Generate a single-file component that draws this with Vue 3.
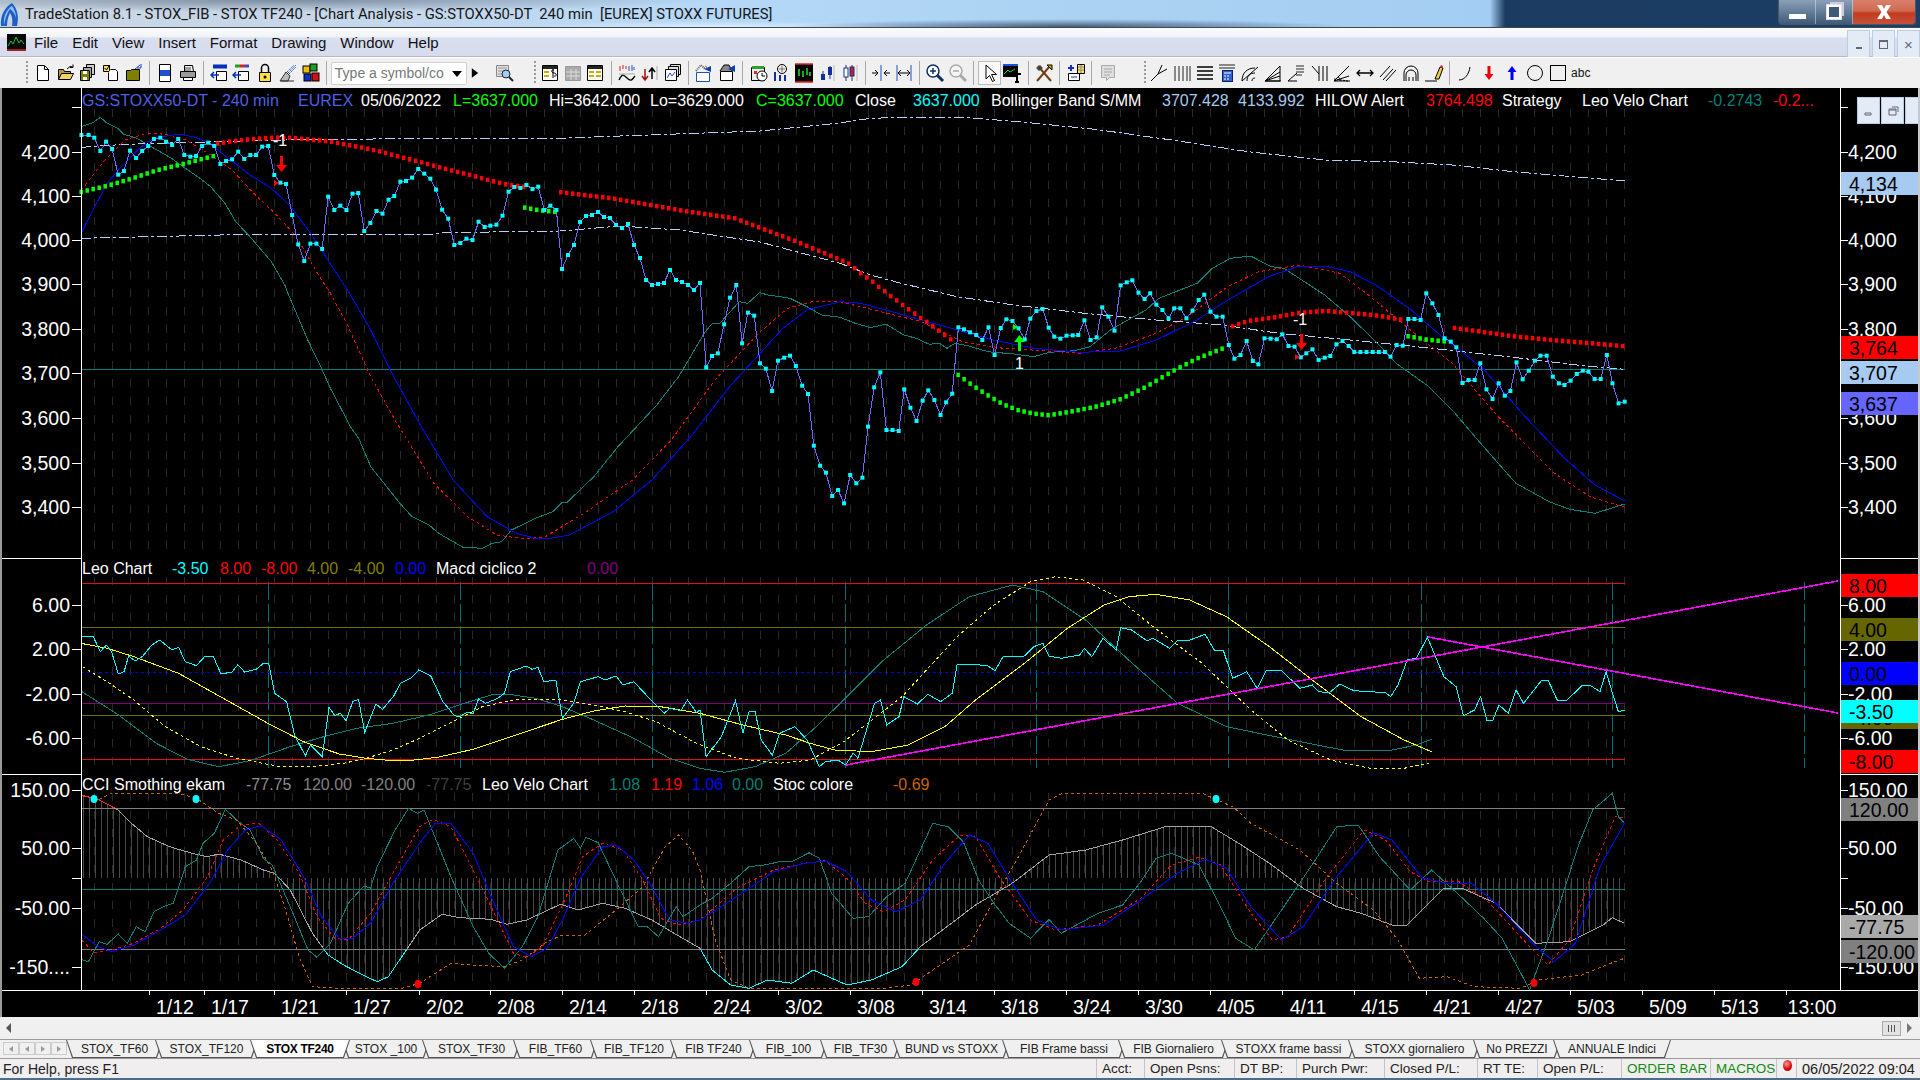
<template>
  <div class="ts">
    <header class="title">
      <svg class="title-ico" viewBox="0 0 20 26">
        <path d="M1 25C0 14 5 6 12 2c6 6 7 15 5 23h-5c1-6 0-10-2-13-2 4-3 8-3 13z" fill="#1f5fc8" />
        <path d="M4 24C3 15 7 8 12 5c3 4 4 8 4 12-1-4-3-7-6-9-3 4-5 10-6 16z" fill="#8fc0f4" />
      </svg>
      <span class="title-txt">{{ windowTitle }}</span>
      <div class="win-btns">
        <button class="wb"><i class="wb-min"></i></button>
        <button class="wb"><i class="wb-res"></i></button>
        <button class="wb wb-close">
          <svg viewBox="0 0 24 18" width="24" height="18"><path d="M5 2h5l2 4 2-4h5l-4.500 7 4.500 7h-5l-2-4-2 4H5l4.500-7z" fill="#fff" /></svg>
        </button>
      </div>
    </header>

    <nav class="menu">
      <svg class="menu-logo" viewBox="0 0 19 17">
        <rect width="19" height="17" fill="#0a0a0a" />
        <rect y="15" width="19" height="2" fill="#a02020" />
        <path d="M1 12l3-5 2 3 3-7 3 6 2-3 3 4" fill="none" stroke="#20c040" />
      </svg>
      <span v-for="m in menus" :key="m" class="menu-item">{{ m }}</span>
      <div class="mdi">
        <span class="mdi-btn"><i class="mdi-min"></i></span>
        <span class="mdi-btn"><i class="mdi-res"></i></span>
        <span class="mdi-btn mdi-x">×</span>
      </div>
    </nav>

    <div class="tools">
      <template v-for="(t, i) in toolbar" :key="i">
        <i v-if="t === '|'" class="sep"></i>
        <i v-else-if="t === 'grip'" class="grip"></i>
        <div v-else-if="t === 'combo'" class="combo">
          <span>Type a symbol/co</span><b class="combo-arrow"></b>
        </div>
        <span v-else-if="t === 'abc'" class="tool abc wide">abc</span>
        <span v-else class="tool" :class="{ wide: i > 56, on: t === 'cursor', tiny: t === 'play' }">
          <svg viewBox="0 0 20 20" width="20" height="20" v-html="ico[t]"></svg>
        </span>
      </template>
    </div>

    <svg class="chart" width="1920" height="929" viewBox="0 88 1920 929">
      <defs>
        <clipPath id="under"><rect x="81" y="949" width="1544" height="50" /></clipPath>
        <clipPath id="over"><rect x="81" y="780" width="1544" height="28" /></clipPath>
      </defs>

      <!-- grid -->
      <g stroke="#2a2a2a" stroke-dasharray="8 10" shape-rendering="crispEdges">
        <template v-for="x in gridX" :key="x">
          <line :x1="x" :x2="x" y1="109" y2="556" />
          <line :x1="x" :x2="x" y1="577" y2="771" />
          <line :x1="x" :x2="x" y1="793" y2="988" />
        </template>
      </g>
      <g stroke="#007070" stroke-dasharray="18 4" shape-rendering="crispEdges">
        <line v-for="x in cycleX" :key="x" :x1="x" :x2="x" y1="582" y2="768" />
      </g>

      <!-- histogram under the CCI line -->
      <g stroke="#484848" shape-rendering="crispEdges">
        <line v-for="h in hist" :key="h.x" :x1="h.x" :x2="h.x" y1="878" :y2="h.y" />
      </g>

      <!-- level lines -->
      <g shape-rendering="crispEdges">
        <line v-for="l in levels" :key="l.y" x1="81" x2="1625" :y1="l.y" :y2="l.y" :stroke="l.c" :stroke-dasharray="l.d" />
      </g>

      <!-- series -->
      <g fill="none" shape-rendering="crispEdges">
        <polyline v-for="s in series" :key="s.k" :points="pts(s.p)" :stroke="s.c" :stroke-dasharray="s.d" />
        <polyline :points="pts(cciLine)" stroke="#00ffff" clip-path="url(#under)" />
        <polyline :points="pts(cciLine)" stroke="#ff3030" clip-path="url(#over)" />
        <line x1="846" y1="765" x2="1838" y2="581" stroke="#ff00ff" stroke-width="1.6" />
        <line x1="1428" y1="637" x2="1838" y2="713" stroke="#ff00ff" stroke-width="1.6" />
      </g>

      <rect v-for="(d, i) in redDots" :key="'r' + i" :x="d[0] - 2" :y="d[1] - 2" width="3.500" height="4.500" fill="#ff0000" />
      <rect v-for="(d, i) in greenDots" :key="'g' + i" :x="d[0] - 2" :y="d[1] - 2" width="3.500" height="4.500" fill="#00ff00" />
      <rect v-for="(d, i) in price" :key="'c' + i" :x="d[0] - 2" :y="d[1] - 2" width="4" height="4" fill="#00ffff" />

      <!-- stoc dots -->
      <ellipse v-for="d in stocDots" :key="d[0]" :cx="d[0]" :cy="d[1]" rx="3.500" ry="4" :fill="d[2]" />

      <!-- signal arrows -->
      <path d="M280 156h3v9h4l-5.500 7-5.500-7h4z" fill="#ff0000" />
      <path d="M274 180l5 3-5 3z" fill="#ff0000" />
      <path d="M1300 334h3v9h4l-5.500 7-5.500-7h4z" fill="#ff0000" />
      <path d="M1295 354l5 3-5 3z" fill="#ff0000" />
      <path d="M1018 351h3v-9h4l-5.500-7-5.500 7h4z" fill="#00ff00" />
      <path d="M1013 324l5 3-5 3z" fill="#00ff00" />
      <g class="t16" fill="#fff">
        <text x="273" y="146">-1</text>
        <text x="1015" y="369">1</text>
        <text x="1293" y="325">-1</text>
      </g>

      <!-- frame -->
      <g stroke="#fff" shape-rendering="crispEdges">
        <line x1="81" x2="81" y1="88" y2="990" />
        <line x1="1840" x2="1840" y1="88" y2="990" />
        <line x1="2" x2="81" y1="558" y2="558" />
        <line x1="1840" x2="1918" y1="558" y2="558" />
        <line x1="2" x2="81" y1="774" y2="774" />
        <line x1="1840" x2="1918" y1="774" y2="774" />
        <line x1="2" x2="1918" y1="990" y2="990" />
        <line v-for="t in axisTicks" :key="t" x1="72" x2="81" :y1="t" :y2="t" />
        <line v-for="t in axisTicks" :key="'r' + t" x1="1840" x2="1848" :y1="t" :y2="t" />
        <line v-for="d in dates" :key="'d' + d.t" :x1="d.x - 26" :x2="d.x - 26" y1="990" y2="995" />
      </g>
      <rect x="0" y="88" width="2" height="929" fill="#9a9a9a" />
      <rect x="1918" y="88" width="2" height="929" fill="#c8c8c8" />

      <!-- axis labels -->
      <g class="t-ax" fill="#fff">
        <text v-for="a in leftAxis" :key="a.t" x="70" :y="a.y + 7" text-anchor="end">{{ a.t }}</text>
        <text v-for="a in rightAxis" :key="'r' + a.t" x="1848" :y="a.y + 7">{{ a.t }}</text>
        <text v-for="d in dates" :key="d.t" :x="d.x" y="1014" text-anchor="middle">{{ d.t }}</text>
      </g>
      <g class="t-ax" v-for="b in boxes" :key="b.t">
        <rect x="1841" :y="b.y" width="77" height="23" :fill="b.c" />
        <text x="1849" :y="b.y + 19" fill="#000">{{ b.t }}</text>
      </g>

      <!-- pane headers -->
      <g class="t16">
        <text v-for="h in heads" :key="h.x + '' + h.y" :x="h.x" :y="h.y" :fill="h.c">{{ h.t }}</text>
      </g>

      <!-- child window buttons over the chart -->
      <g stroke="#b8cde4" fill="#e3ebf6">
        <rect x="1857.500" y="97.500" width="22" height="26" />
        <rect x="1881.500" y="97.500" width="22" height="26" />
        <rect x="1905.500" y="97.500" width="13" height="26" />
      </g>
      <path d="M1865 113h6v2h-6zM1889 109h7v6h-7zM1889 110h7M1892 107h6v5" fill="none" stroke="#667" />
    </svg>

    <div class="hscroll">
      <b class="arr-l"></b>
      <span class="thumb"><i></i><i></i><i></i></span>
      <b class="arr-r"></b>
    </div>

    <div class="tabs">
      <div class="tab-nav">
        <span class="nav"><b class="first"></b></span>
        <span class="nav"><b class="prev"></b></span>
        <span class="nav"><b class="next"></b></span>
        <span class="nav"><b class="last"></b></span>
      </div>
      <div v-for="t in tabs" :key="t.n" class="tab" :class="{ active: t.n === 'STOX TF240' }" :style="{ width: t.w + 'px' }">
        <span>{{ t.n }}</span>
      </div>
    </div>

    <footer class="status">
      <span class="help">For Help, press F1</span>
      <span v-for="c in cells" :key="c.t" class="cell" :class="{ green: c.g }" :style="{ width: c.w + 'px' }">{{ c.t }}</span>
      <span class="cell ball-cell"><i class="ball"></i></span>
      <span class="cell clock">06/05/2022 09:04</span>
    </footer>
    <div class="strip"></div>
  </div>
</template>

<script setup>
const windowTitle = 'TradeStation 8.1 - STOX_FIB - STOX TF240 - [Chart Analysis - GS:STOXX50-DT  240 min  [EUREX] STOXX FUTURES]'
const menus = ['File', 'Edit', 'View', 'Insert', 'Format', 'Drawing', 'Window', 'Help']

const line = 'fill="none" stroke="#000"'
const ico = {
  new: `<path d="M4.500 2.500h7l4 4v11h-11z" fill="#fff" stroke="#000"/><path d="M11.500 2.500v4h4" ${line}/>`,
  open: `<path d="M2.500 16.500v-10h5l1 2h6v2" fill="#b89a30" stroke="#000"/><path d="M2.500 16.500l3-6h12l-3 6z" fill="#f0d468" stroke="#000"/><path d="M11 6q3-4 6-2M17 1.500v3h-3" ${line}/>`,
  files: `<path d="M8.500 1.500h8v10h-8z" fill="#ccc" stroke="#000"/><path d="M5.500 4.500h8v10h-8z" fill="#aaa" stroke="#000"/><path d="M2.500 7.500h9v10h-9z" fill="#808000" stroke="#000"/><path d="M5 8h4v3H5zM5 14h4v3H5z" fill="#fff"/>`,
  clip: `<path d="M2.500 2.500h6v6h-6z" fill="#ffe060" stroke="#000"/><path d="M3.500 5l2 2 3-5" ${line}/><path d="M9.500 6.500h5l2 2v9h-9v-8" fill="#fff" stroke="#000"/>`,
  folder: `<path d="M2.500 17.500v-10h4l1-1h8v11z" fill="#808000" stroke="#000"/><path d="M11 6l5-4M17 1v4h-4" fill="none" stroke="#2040c0"/>`,
  preview: `<path d="M4.500 1.500h11v17h-11z" fill="#fff" stroke="#000"/><rect x="5" y="7" width="10" height="6" fill="#2050d0"/>`,
  printer: `<path d="M6.500 2.500h8l1 6h-9z" fill="#eee" stroke="#000"/><path d="M2.500 8.500h15v6h-15z" fill="#999" stroke="#000"/><path d="M5.500 14.500h9v3h-9z" fill="#fff" stroke="#000"/><path d="M7 5h6M7 7h6" stroke="#555"/>`,
  winA: `<path d="M3 2.500h14M3 4.500h14" stroke="#0030c0" stroke-width="2"/><path d="M6.500 8.500h10v9h-10z" fill="#fff" stroke="#000"/><path d="M1 12h8M4 9l-3 3 3 3" fill="none" stroke="#0030c0" stroke-width="1.500"/>`,
  winB: `<path d="M3 3h5" stroke="#20a020" stroke-width="3"/><path d="M8 3h5" stroke="#e02020" stroke-width="3"/><path d="M13 3h4" stroke="#2050e0" stroke-width="3"/><path d="M6.500 8.500h10v9h-10z" fill="#fff" stroke="#000"/><path d="M1 12h8M4 9l-3 3 3 3" fill="none" stroke="#0030c0" stroke-width="1.500"/>`,
  lock: `<path d="M6.500 9V5a3.500 3.500 0 017 0v4" ${line} stroke-width="1.500"/><path d="M4.500 9.500h11v9h-11z" fill="#ffe040" stroke="#000"/><circle cx="10" cy="14" r="1.500"/>`,
  wizard: `<path d="M2 18l6-9 4 4-2 5z" fill="#bbb" stroke="#333"/><path d="M9 9l7-7M11 11l7-7M10 10l8-8" stroke="#3060c0" stroke-dasharray="2 1"/><path d="M3 18h13" stroke="#333"/>`,
  cubes: `<rect x="2" y="3" width="7" height="7" fill="#e8c000" stroke="#000"/><rect x="9" y="1" width="7" height="7" fill="#20a020" stroke="#000"/><rect x="3" y="11" width="7" height="7" fill="#1030c0" stroke="#000"/><rect x="11" y="10" width="7" height="8" fill="#d01010" stroke="#000"/>`,
  play: `<path d="M6 4l8 6-8 6z" fill="#000"/>`,
  search: `<path d="M2.500 2.500h12v11h-12z" fill="#ddd" stroke="#888"/><path d="M4 5h9M4 8h5M4 11h4" stroke="#999"/><circle cx="12" cy="11" r="4" fill="#9cd0f0" stroke="#222"/><path d="M15 14l4 4" stroke="#222" stroke-width="2"/>`,
  dollar: `<path d="M2.500 2.500h15v15h-15z" fill="#fff" stroke="#000"/><path d="M3 3h14v3H3z" fill="#222"/><path d="M4 8h5v2H4zM4 12h5v2H4z" fill="#c8b000"/><path d="M14 7c-3-1-3 3 0 3s3 4 0 3M13 6v9" ${line}/>`,
  tableG: `<path d="M2.500 3.500h15v14h-15z" fill="#aaa" stroke="#999"/><path d="M8 6v11M13 6v11M3 9h14M3 13h14" stroke="#ddd"/>`,
  table: `<path d="M2.500 2.500h15v15h-15z" fill="#fff" stroke="#000"/><path d="M3 3h14v3H3z" fill="#222"/><path d="M4 8h5v2H4zM11 8h5v2h-5zM4 12h5v2H4zM11 12h5v2h-5z" fill="#c8b000"/>`,
  wave: `<path d="M3 3v5M6 2v4M9 3v3" stroke="#d02020"/><path d="M12 3v5M15 2v6M17 4v3" stroke="#2050d0"/><path d="M2 17c3-6 4-6 8-2s5 2 8-2" ${line} stroke-width="1.300"/><path d="M2 11h16" stroke="#aaa"/>`,
  arrowsUD: `<path d="M5 6v10M2 13l3 4 3-4" fill="none" stroke="#a01010" stroke-width="1.500"/><path d="M12 16V6M9 9l3-4 3 4" fill="none" stroke="#000" stroke-width="1.500"/><path d="M17 3v14" stroke="#aaa"/>`,
  stack: `<path d="M7.500 1.500h10v10h-10z" fill="#ddd" stroke="#000"/><path d="M5.500 3.500h10v10h-10z" fill="#ddd" stroke="#000"/><path d="M2.500 6.500h11v11h-11z" fill="#fff" stroke="#000"/><path d="M4 15l3-5 2 3 3-4" fill="none" stroke="#2050d0"/>`,
  chartA: `<path d="M2.500 9.500h13v9h-13z" fill="#fff" stroke="#2050b0"/><path d="M2 8l5-6 3 3 3-2" fill="none" stroke="#666" stroke-dasharray="1 1" stroke-width="2"/><path d="M10 6l7-3v6z" fill="#1040b0"/>`,
  boxA: `<path d="M3.500 8.500h12v9h-12z" fill="#fff" stroke="#000"/><path d="M3 8l4-6h5l3 6" fill="#888" stroke="#000"/><path d="M11 6l7-4v7z" fill="#1040b0"/>`,
  clock: `<path d="M2.500 4.500h13v13h-13z" fill="#eee" stroke="#000"/><path d="M3 3h12v3H3z" fill="#30a030"/><path d="M5 8h3v3H5z" fill="#d03030"/><circle cx="13" cy="13" r="5" fill="#fff" stroke="#000"/><path d="M13 10v3h3" ${line}/>`,
  loupeBars: `<circle cx="11" cy="6" r="4.500" fill="#eee" stroke="#000"/><path d="M11 3v6M8 6h6" stroke="#777"/><path d="M4 9v9M9 12v6M14 12v6" stroke="#1030a0" stroke-width="2"/>`,
  blackC: `<rect x="1" y="1" width="18" height="18" fill="#000"/><path d="M1 1h18M1 19h18" stroke="#e02020" stroke-width="1.500"/><path d="M5 6v7M9 8v6M13 5v7M16 9v4" stroke="#20e020" stroke-width="1.500"/>`,
  notes: `<path d="M6 8v8M13 3v13" stroke="#1030a0"/><rect x="4" y="11" width="4" height="6" fill="#1030a0"/><rect x="11" y="4" width="4" height="8" fill="#1030a0"/><path d="M17 2v16" stroke="#bbb"/>`,
  candles: `<path d="M7 2v16M13 2v16" stroke="#333"/><rect x="5" y="5" width="4" height="9" fill="#fff" stroke="#1030a0"/><rect x="11" y="4" width="4" height="9" fill="#c02020" stroke="#1030a0"/><path d="M18 2v16" stroke="#bbb"/>`,
  split1: `<path d="M10 2v16" stroke="#2050c0"/><path d="M1 10h6M4 7l3 3-3 3" ${line}/><path d="M19 10h-6M16 7l-3 3 3 3" ${line}/>`,
  split2: `<path d="M3 2v16M17 2v16" stroke="#2050c0"/><path d="M10 10h-6M7 7l-3 3 3 3M10 10h6M13 7l3 3-3 3" ${line}/>`,
  zoomIn: `<circle cx="8" cy="8" r="6" fill="#fff" stroke="#103060" stroke-width="1.500"/><path d="M5 8h6M8 5v6" stroke="#103060" stroke-width="1.500"/><path d="M12 12l6 6" stroke="#103060" stroke-width="3"/>`,
  zoomOut: `<circle cx="8" cy="8" r="6" fill="#f4f4f4" stroke="#aaa" stroke-width="1.500"/><path d="M5 8h6" stroke="#aaa" stroke-width="1.500"/><path d="M12 12l6 6" stroke="#aaa" stroke-width="3"/>`,
  cursor: `<path d="M6 2v14l3.500-3.500 3 6 2-1-3-6h5z" fill="#fff" stroke="#000"/>`,
  tChart: `<rect x="1" y="1" width="15" height="13" fill="#000"/><path d="M1 2h15" stroke="#2050e0" stroke-width="2"/><path d="M2 11l4-4 2 2 5-3" fill="none" stroke="#20d040"/><path d="M11 11h8M15 11v8M13 19h4" stroke="#000" stroke-width="2" fill="none"/>`,
  hammer: `<path d="M4 3l13 15M16 3L3 18" stroke="#704010" stroke-width="2"/><path d="M2 5l4-3 3 3-4 3z" fill="#444"/><path d="M13 2h5v5z" fill="#c8b000" stroke="#000"/>`,
  toolSq: `<path d="M11.500 1.500h7v9h-7z" fill="#ffe060" stroke="#000"/><path d="M12 4h6M12 7h6M15 2v8" stroke="#888"/><path d="M2.500 10.500h11v7h-11z" fill="#fff" stroke="#000"/><path d="M5 8V2M2 5h6" stroke="#1030c0" stroke-width="2"/><path d="M5 14h6" stroke="#1030c0"/>`,
  greyDoc: `<path d="M3.500 2.500h13v12h-5l-3 3v-3h-5z" fill="#ddd" stroke="#aaa"/><path d="M6 6h8M6 9h8M6 12h6" stroke="#aaa"/>`,
  fork: `<path d="M2 18l7-7M9 11l4-9M9 11l9-5" ${line}/>`,
  vlines: `<path d="M3 3v15M7 3v15M11 3v15M15 3v15M18 3v15" stroke="#222"/>`,
  hlines: `<path d="M2 4h16M2 8h16M2 12h16M2 16h16" stroke="#000" stroke-width="1.400"/>`,
  calc: `<path d="M2 2h16M2 5h16" stroke="#222"/><rect x="5.500" y="7.500" width="10" height="11" fill="#3060d0" stroke="#102060"/><path d="M7 10h7M7 13h2M10 13h2M7 16h2M10 16h2" stroke="#fff"/>`,
  arc: `<path d="M2 18c0-8 5-13 13-13M7 18c0-5 3-8 8-8M12 18c0-2 1-3 3-3M2 18L18 4" ${line}/>`,
  fan: `<path d="M2 18L17 3v15zM2 18l15-5M2 18l15-9" ${line}/><path d="M2 18h16" stroke="#000"/>`,
  retr: `<path d="M2 18l9-8" ${line}/><path d="M10 3h8M10 6h8M10 9h8M10 12h6" stroke="#222"/><path d="M2 18h9" stroke="#000"/>`,
  vfan: `<path d="M3 3l7 8M10 3v15M14 3v15M18 3v15" ${line}/>`,
  angle: `<path d="M2 18L17 3M2 18h16M2 18l15-5M8 18c0-2-1-4-2-4" ${line}/><path d="M2 16l14 2" stroke="#000" stroke-dasharray="2 1"/>`,
  hArrow: `<path d="M2 10h16M5 7l-3 3 3 3M15 7l3 3-3 3" ${line} stroke-width="1.300"/>`,
  parallel: `<path d="M2 14L12 3M5 17L15 6M8 18L18 7" ${line}/>`,
  ghost: `<path d="M3 18V10a7 7 0 0114 0v8M5 18v-6a5 5 0 0110 0v6M8 18v-4M12 18v-4" ${line}/>`,
  pencil: `<path d="M1 18h12" stroke="#000"/><path d="M11 16l5-12 3 1-4 11z" fill="#f0d040" stroke="#000"/><path d="M16 4l1-2 2 1-1 2z" fill="#e03020"/>`,
  curve: `<path d="M3 17c6 0 10-6 11-13" ${line}/>`,
  down: `<path d="M8.500 3h3v8h3L10 17l-4.500-6h3z" fill="#f00000"/>`,
  up: `<path d="M8.500 17h3V9h3L10 3 5.500 9h3z" fill="#0000f0"/>`,
  circle: `<circle cx="10" cy="10" r="7.500" ${line}/>`,
  square: `<rect x="2.500" y="2.500" width="15" height="15" ${line}/>`,
}

const toolbar = [
  'grip', 'new', 'open', 'files', 'clip', 'folder', '|', 'preview', 'printer', '|',
  'winA', 'winB', 'lock', 'wizard', 'cubes', '|', 'combo', 'play', 'search', 'grip',
  'dollar', 'tableG', 'table', '|', 'wave', 'arrowsUD', 'stack', '|', 'chartA', 'boxA', '|',
  'clock', 'loupeBars', 'blackC', 'notes', 'candles', '|', 'split1', 'split2', '|',
  'zoomIn', 'zoomOut', '|', 'cursor', 'tChart', '|', 'hammer', '|', 'toolSq', '|', 'greyDoc', 'grip',
  'fork', 'vlines', 'hlines', 'calc', 'arc', 'fan', 'retr', 'vfan', 'angle', 'hArrow', 'parallel', 'ghost', 'pencil', '|',
  'curve', 'down', 'up', 'circle', 'square', 'abc',
]

const z = (sx, ox, oy, a) => {
  const out = []
  for (let i = 0; i < a.length; i += 2) out.push([ox + a[i] / sx, oy + a[i + 1] / 3])
  return out
}
const z8 = (a) => z(2.8, 0, 90, a)
const z9 = (a) => z(2.24, 0, 550, a)
const z10 = (a) => z(1.6333, 700, 550, a)
const z11 = (a) => z(2.0632, 80, 290, a)
const z12 = (a) => z(1.96, 840, 100, a)
const pts = (p) => p.map((q) => q[0].toFixed(1) + ',' + q[1].toFixed(1)).join(' ')

const yAt = (p, x) => {
  for (let i = 1; i < p.length; i++) {
    if (x <= p[i][0]) {
      const t = (x - p[i - 1][0]) / (p[i][0] - p[i - 1][0] || 1)
      return p[i - 1][1] + t * (p[i][1] - p[i - 1][1])
    }
  }
  return p[p.length - 1][1]
}
const sample = (p, step = 6) => {
  const out = []
  for (let x = p[0][0]; x <= p[p.length - 1][0]; x += step) out.push([x, yAt(p, x)])
  return out
}

// price pane
const price = [
  ...z8([228,135,248,135,264,143,281,183,297,155,314,177,331,254,347,243,364,182,381,204,398,183,415,168,431,147,449,143,465,155,482,165,499,147,516,195,533,200,549,198,566,168,583,158,600,168,617,222,633,213,650,208,667,185,684,207,701,195,717,195,734,170,751,168,768,255,785,278,801,282,818,375,835,463,852,513,869,461,886,461,902,477,919,320,936,360,953,347,970,360,987,311,1003,309,1020,423,1037,399,1054,363,1071,371,1088,329,1104,318,1121,275,1137,273,1154,263,1171,237,1188,251,1205,266,1221,299,1238,359,1255,386,1272,465,1289,459,1306,446,1323,450,1340,395,1357,411,1373,407,1390,404,1407,377,1424,305,1440,291,1457,294,1474,285,1491,297,1507,290,1524,360,1541,347,1558,360]),
  [562,269],[568,255],[574,245],[580,222],[586,216],[592,215],[598,212],[604,217],[610,218],[616,225],[622,228],[628,224],[634,245],[640,258],[646,280],[652,285],[658,284],[664,283],[670,270],[676,280],[682,282],[688,285],[694,290],[700,283],
  ...z11([1292,232,1304,198,1316,190,1329,103,1341,23,1354,-15,1366,160,1378,68,1391,77,1403,220,1415,236,1428,303,1440,212,1453,203,1465,197,1477,228,1490,287,1502,312,1514,467,1527,527,1539,548,1552,618,1564,600]),
  ...z12([8,1210,20,1125,32,1150,44,1133,55,980,67,862,79,817,91,990,103,990,115,993,126,868,138,923,150,963,162,902,173,871,185,900,197,945,208,907,220,881,232,682,243,688,255,697,267,705,279,720,291,682,303,765,315,684,326,658,338,663,350,685,362,718,373,656,385,633,397,627,409,683,420,710,432,716,444,707,456,706,467,705,479,661,491,720,503,712,514,622,526,650,538,692,550,556,562,547,573,541,585,578,597,597,608,580,620,614,632,630,644,655,655,625,667,625,679,655,691,632,703,600,714,584,726,635,738,650,750,650,762,735,773,776,785,765,797,723,809,783,820,793,832,715,844,716,856,718,867,703,879,738,891,740,903,772,914,760,926,748,938,780,950,773,961,768,973,733,985,723,997,738,1008,756,1020,756,1032,756,1044,756,1056,756,1068,756,1079,770,1091,735,1103,737,1114,657,1126,657,1138,660,1149,580,1161,610,1173,645,1185,715,1197,725,1208,742,1220,849,1232,840,1244,840,1255,790,1267,868,1279,897,1291,850,1303,887,1314,873,1326,787,1338,838,1350,812,1362,782,1373,767,1385,767,1397,830,1409,850,1420,855,1432,842,1444,822,1456,812,1467,815,1479,837,1491,837,1503,765,1514,850,1526,910,1538,905]),
]
const teal1 = [
  ...z8([228,110,260,98,281,82,300,100,330,115,347,133,380,143,420,168,480,205,510,228,560,265,590,290,630,340,660,395,700,440,760,515,800,590]),
  ...z11([426,0,470,150,500,240,515,290,560,415,575,445,600,530,660,640,685,680,720,705,740,730,790,772,830,775,850,760,870,755,890,720,940,685,975,665,995,637,1005,637,1060,560,1110,470,1190,345,1235,260,1290,125,1305,100,1320,100,1360,35,1378,40,1402,8,1420,15,1465,25,1500,50,1530,75,1568,82]),
  ...z12([30,670,60,683,90,672,125,705,150,715,175,733,195,730,210,745,225,730,250,737,290,755,340,762,380,770,410,757,460,752,490,740,530,690,570,655,600,630,625,595,700,550,730,505,765,475,805,468,845,500,870,505,950,585,1000,650,1060,740,1090,790,1150,855,1200,930,1250,1020,1290,1090,1325,1150,1390,1205,1430,1228,1480,1240,1538,1212]),
]
const blue1 = [
  ...z8([228,428,260,360,300,280,340,230,390,175,430,145,500,132,540,140,580,155,640,205,700,255,760,295,810,345,870,430,930,530]),
  ...z11([552,0,600,120,640,240,700,400,770,570,840,680,900,730,940,745,970,745,1010,735,1100,665,1180,570,1260,440,1340,290,1400,195,1450,115,1500,60,1568,35]),
  ...z12([40,610,90,630,160,660,230,690,300,720,380,745,470,757,550,753,620,720,700,660,760,600,840,530,900,498,950,498,1000,515,1050,555,1120,630,1180,710,1260,805,1340,945,1420,1075,1480,1155,1538,1203]),
]
const red1 = [
  ...z8([228,300,290,215,350,150,410,130,470,133,520,150,590,195,650,240,710,310,770,370,830,440,900,570]),
  ...z11([513,0,550,100,600,260,650,390,730,580,800,680,860,735,920,747,960,740,1040,670,1140,570,1220,450,1310,270,1400,130,1460,55,1510,35,1568,35]),
  ...z12([80,635,160,665,240,725,320,745,400,752,470,760,540,745,620,700,680,650,760,560,820,515,900,495,980,520,1040,590,1110,680,1200,790,1290,950,1400,1120,1470,1190,1538,1222]),
]
const bbUp = [
  ...z8([228,172,350,163,500,158,620,155,800,150,1000,148,1150,145,1568,145]),
  [620,136],[760,131],[840,123],
  ...z12([60,55,130,52,240,52,350,65,500,88,650,120,800,155,950,180,1080,185,1200,195,1320,215,1450,232,1538,243]),
]
const bbLo = [
  ...z8([228,445,420,440,700,433,1220,432,1235,428,1568,423]),
  [620,226],[680,230],[760,242],
  ...z12([0,490,60,525,120,550,230,590,340,615,480,640,620,660,750,675,860,700,1000,720,1130,740,1320,772,1460,798,1538,808]),
]

const redDots = [
  ...sample(z8([610,160,650,153,700,147,770,142,820,143,870,148,920,153,970,163,1020,173,1070,185,1120,200,1170,213,1220,228,1270,242,1320,255,1370,270,1420,283,1470,290])),
  ...sample([[561,192],[612,198],[686,211],[735,218],[796,241],...z12([8,483,20,492,42,520,56,535,68,548,78,562,90,575,102,590,114,603,126,617,138,630,150,643,162,657,174,668,186,683,198,695,220,720])]),
  ...sample(z12([770,678,800,662,850,652,900,638,950,632,1000,638,1050,645,1100,658])),
  ...sample(z12([1205,683,1260,695,1320,708,1400,720,1480,730,1538,738])),
]
const greenDots = [
  ...sample(z8([228,305,300,287,370,265,440,240,510,222,600,197])),
  ...sample(z8([1470,352,1510,360,1558,365])),
  ...sample(z12([232,824,260,855,290,885,320,912,350,930,380,940,410,945,450,935,500,920,550,897,600,860,650,815,700,775,755,742])),
  ...sample(z12([1114,708,1150,718,1196,725])),
]

// leo chart pane
const cyan2 = [
  ...z9([181,260,208,258,225,305,238,285,250,305,265,372,278,365,288,318,303,333,320,318,340,285,358,270,385,300,400,292,415,335,440,347,458,320,478,320,495,372,520,366,533,344,548,366,575,357,590,340,602,342,615,430,642,455,660,555,684,618,695,585,722,620,737,472,750,497,762,490,775,512,790,455,803,448,817,547,842,462,857,478,882,438,897,400,920,385,938,360,965,378,992,455,1018,497,1030,500,1045,488,1060,490,1072,447,1088,460,1115,445,1130,430,1143,365,1165,355,1178,348,1192,358,1205,352,1218,395,1245,390,1260,505,1285,460,1300,395,1340,380,1355,390,1380,378,1395,405,1420,395,1437,420,1462,455,1488,490,1500,475,1525,482,1540,450,1560,487]),
  ...z10([0,480,10,620,35,560,58,452,70,550,80,485,90,485,100,570,118,615,130,550,155,530,175,570,195,650,205,635,225,630,238,645,250,610,258,625,285,460,295,450,305,525,325,500,333,440,355,462,372,433,393,455,412,430,420,342,445,342,470,348,482,362,495,320,530,318,545,290,560,280,570,318,590,325,620,315,628,295,640,320,658,265,680,300,687,233,705,240,730,272,740,265,767,295,780,272,800,270,825,253,840,300,855,303,870,385,893,365,910,415,925,362,950,362,980,415,1000,405,1010,425,1028,428,1045,402,1068,422,1120,428,1128,440,1140,405,1155,330,1170,325,1188,262,1215,380,1235,410,1247,497,1265,480,1275,440,1285,510,1295,510,1305,465,1320,490,1333,420,1345,460,1375,390,1385,390,1400,450,1415,452,1440,408,1455,407,1470,425,1480,365,1492,440,1500,485,1510,480]),
]
const yel2 = [
  ...z9([181,280,240,295,300,320,400,370,500,445,600,520,680,575,760,612,820,625,880,632,915,632,980,622,1060,598,1160,553,1260,508,1330,483,1400,468,1480,470,1568,490]),
  ...z10([70,525,140,555,180,580,220,600,280,605,340,585,400,530,450,450,530,340,600,235,660,165,700,140,745,133,800,150,860,200,930,290,1000,390,1080,500,1150,570,1195,605]),
]
const yelD2 = [
  ...z9([185,350,240,395,300,450,370,530,450,590,530,625,620,648,700,650,770,640,820,625,880,600,940,565,1030,505,1080,470,1150,450,1250,447,1330,465,1400,485,1470,515,1560,580]),
  ...z10([60,625,130,640,180,630,235,575,330,440,420,260,480,165,540,95,580,80,625,90,680,140,740,230,820,340,900,480,960,570,1030,630,1100,657,1150,655,1190,640]),
]
const teal2 = [
  ...z9([181,423,260,490,350,580,420,628,490,650,560,632,650,590,730,558,800,535,880,520,960,495,1040,460,1100,435,1140,433,1200,445,1260,470,1330,510,1420,565,1500,625,1568,655]),
  ...z10([40,667,90,650,140,610,190,530,240,440,300,330,370,225,440,140,510,105,560,125,630,210,700,330,780,460,860,530,980,575,1050,600,1130,600,1170,585,1195,568]),
]

// cci pane
const cciLine = [
  ...z9([185,738,215,745,265,780,290,815,330,860,380,890,430,910,465,920,490,912,540,930,590,960,615,970,650,1020,700,1150,735,1215,770,1245,820,1280,845,1295,870,1280,900,1220,940,1140,990,1093,1030,1103,1100,1108,1135,1123,1180,1110,1220,1085,1255,1063,1295,1080,1350,1060,1400,1075,1460,1110,1510,1150,1568,1195]),
  ...z10([20,1260,50,1305,80,1315,110,1290,150,1300,185,1260,240,1305,280,1290,330,1250,360,1190,400,1135,450,1065,510,1000,570,915,630,900,690,870,760,830,835,830,880,880,930,940,985,1015,1040,1070,1080,1090,1130,1125,1155,1125,1215,1015,1245,1015,1300,1060,1365,1180,1420,1175,1475,1125,1490,1103,1510,1120]),
]
const teal3 = [
  ...z9([181,1228,198,1235,222,1175,240,1183,265,1152,285,1180,305,1130,325,1145,345,1085,370,1068,388,1060,415,950,440,930,455,880,480,850,505,778,530,810,560,840,590,925,610,945,650,1070,690,1200,710,1222,740,1180,780,1060,815,1008,830,1015,845,950,885,840,915,775,935,790,950,780,980,880,1010,980,1040,1070,1060,1130,1095,1210,1130,1255,1170,1190,1205,1100,1250,900,1285,865,1300,895,1312,862,1340,878,1390,1020,1430,1130,1450,1130,1475,1160,1515,1070,1530,1100,1568,1065]),
  ...z10([20,1045,50,1000,80,950,105,945,130,935,150,935,178,908,195,925,215,1030,250,1105,275,1100,305,1040,335,1000,380,820,405,830,430,875,455,990,480,1060,505,1120,540,1165,570,1108,590,1150,650,1090,690,1065,720,995,745,925,770,910,790,925,815,945,850,1070,875,1165,905,1200,950,1080,1005,930,1040,830,1075,825,1110,920,1160,1020,1195,960,1240,1035,1280,1105,1310,1165,1335,1250,1355,1320,1385,1170,1435,885,1458,780,1490,730,1500,800,1510,820]),
]
const blue3 = [
  ...z9([181,1150,220,1190,250,1205,300,1185,360,1140,415,1095,470,1000,510,900,550,840,585,827,630,870,680,980,720,1100,760,1165,790,1165,830,1120,880,1000,940,880,975,820,1010,820,1060,910,1100,1040,1150,1190,1190,1220,1225,1195,1260,1110,1300,985,1350,890,1380,885,1420,930,1460,1010,1500,1110,1540,1120,1568,1110]),
  ...z10([60,1040,120,965,170,940,205,933,240,965,280,1050,320,1085,360,1050,400,940,440,855,470,880,510,1000,550,1110,590,1140,660,1125,720,1050,780,970,825,928,860,955,900,1070,950,1170,985,1130,1040,980,1100,848,1130,870,1180,985,1220,1000,1260,1000,1300,1060,1360,1180,1395,1235,1430,1180,1470,950,1510,820]),
]
const red3 = [
  ...z9([183,1170,210,1208,250,1200,300,1180,360,1135,410,1080,465,980,500,870,540,825,580,820,620,870,670,970,710,1100,750,1165,780,1170,830,1090,880,970,940,830,970,808,1010,830,1060,960,1100,1070,1150,1210,1180,1222,1215,1190,1265,1050,1305,920,1350,880,1395,900,1440,990,1480,1105,1520,1125,1568,1110]),
  ...z10([60,1015,120,960,170,940,205,932,240,985,270,1060,300,1085,335,1050,380,930,425,855,450,860,490,985,540,1110,580,1140,650,1125,720,1045,770,945,815,922,850,945,900,1090,935,1170,960,1160,1020,990,1085,840,1120,870,1160,965,1190,995,1240,995,1290,1060,1355,1190,1385,1245,1420,1170,1460,950,1495,800,1510,805]),
]
const orange3 = [
  ...z9([183,735,220,750,250,730,290,730,400,730,440,745,490,790,530,810,575,880,610,960,640,1080,670,1220,700,1310,760,1315,900,1315,940,1300,1010,1240,1060,1245,1130,1250,1170,1230,1225,1175,1255,1158,1310,1155,1380,1080,1440,1010,1490,890,1520,855,1550,900,1568,960]),
  ...z10([25,1170,50,1290,80,1315,300,1315,345,1305,400,1235,440,1185,480,1050,520,920,570,750,590,732,820,730,870,770,900,820,980,900,1040,1000,1100,1080,1140,1170,1175,1285,1220,1280,1265,1310,1340,1315,1370,1290,1440,1275,1480,1245,1510,1225]),
]

const hist = sample(cciLine).map((d) => ({ x: Math.round(d[0]), y: d[1] }))

const series = [
  { k: 'up', p: bbUp, c: '#b4d0f6', d: '10 3 3 3' },
  { k: 'lo', p: bbLo, c: '#b4d0f6', d: '10 3 3 3' },
  { k: 't1', p: teal1, c: '#0f8078' },
  { k: 'r1', p: red1, c: '#ff0000', d: '3 3' },
  { k: 'b1', p: blue1, c: '#0000ff' },
  { k: 'price', p: price, c: '#6a6af4' },
  { k: 't2', p: teal2, c: '#0f8078' },
  { k: 'yd', p: yelD2, c: '#ffff00', d: '3 3' },
  { k: 'y', p: yel2, c: '#ffff00' },
  { k: 'c2', p: cyan2, c: '#00ffff' },
  { k: 'cci', p: cciLine, c: '#a4a4a4' },
  { k: 't3', p: teal3, c: '#0f8078' },
  { k: 'o3', p: orange3, c: '#c86400', d: '3 3' },
  { k: 'r3', p: red3, c: '#ff0000', d: '3 3' },
  { k: 'b3', p: blue3, c: '#0000ff' },
]

const levels = [
  { y: 369, c: '#008078' },
  { y: 583, c: '#e01010' },
  { y: 627, c: '#707000' },
  { y: 672, c: '#0000d0', d: '3 3' },
  { y: 703, c: '#800080' },
  { y: 715, c: '#707000' },
  { y: 759, c: '#e01010' },
  { y: 808, c: '#808080' },
  { y: 889, c: '#008078' },
  { y: 949, c: '#808080' },
]

const gridX = []
for (let x = 1624; x > 81; x -= 18) gridX.push(x)
const cycleX = [268, 460, 652, 845, 1036, 1228, 1421, 1612, 1804]

const stocDots = [
  [94, 799, '#00ffff'], [196, 799, '#00ffff'], [1216, 799, '#00ffff'],
  [418, 984, '#ff0000'], [916, 982, '#ff0000'], [1534, 983, '#ff0000'],
]

const tick = (y, t) => ({ y, t })
const leftAxis = [
  tick(152, '4,200'), tick(196, '4,100'), tick(240, '4,000'), tick(284, '3,900'), tick(329, '3,800'),
  tick(373, '3,700'), tick(418, '3,600'), tick(463, '3,500'), tick(507, '3,400'),
  tick(605, '6.00'), tick(649, '2.00'), tick(694, '-2.00'), tick(738, '-6.00'),
  tick(790, '150.00'), tick(848, '50.00'), tick(908, '-50.00'), tick(967, '-150....'),
]
const rightAxis = [
  tick(152, '4,200'), tick(196, '4,100'), tick(240, '4,000'), tick(284, '3,900'), tick(329, '3,800'),
  tick(418, '3,600'), tick(463, '3,500'), tick(507, '3,400'),
  tick(605, '6.00'), tick(649, '2.00'), tick(694, '-2.00'), tick(738, '-6.00'),
  tick(790, '150.00'), tick(848, '50.00'), tick(908, '-50.00'), tick(967, '-150.00'),
]
const axisTicks = [107, 152, 196, 240, 284, 329, 373, 418, 463, 507, 605, 649, 694, 738, 790, 848, 878, 908, 967]

const boxes = [
  { y: 172, t: '4,134', c: '#a6caf0' },
  { y: 336, t: '3,764', c: '#ff0000' },
  { y: 361, t: '3,707', c: '#a6caf0' },
  { y: 392, t: '3,637', c: '#6666ff' },
  { y: 574, t: '8.00', c: '#ff0000' },
  { y: 618, t: '4.00', c: '#666600' },
  { y: 662, t: '0.00', c: '#0000ff' },
  { y: 706, t: '-4.00', c: '#666600' },
  { y: 700, t: '-3.50', c: '#00ffff' },
  { y: 750, t: '-8.00', c: '#ff0000' },
  { y: 798, t: '120.00', c: '#808080' },
  { y: 915, t: '-77.75', c: '#a9a9a9' },
  { y: 940, t: '-120.00', c: '#808080' },
]

const dates = [
  ['1/12', 175], ['1/17', 230], ['1/21', 300], ['1/27', 372], ['2/02', 445], ['2/08', 516], ['2/14', 588], ['2/18', 660],
  ['2/24', 732], ['3/02', 804], ['3/08', 876], ['3/14', 948], ['3/18', 1020], ['3/24', 1092], ['3/30', 1164], ['4/05', 1236],
  ['4/11', 1308], ['4/15', 1380], ['4/21', 1452], ['4/27', 1524], ['5/03', 1596], ['5/09', 1668], ['5/13', 1740], ['13:00', 1812],
].map((d) => ({ t: d[0], x: d[1] }))

const row = (y, list) => list.map((h) => ({ y, x: h[0], t: h[1], c: h[2] }))
const heads = [
  ...row(106, [
    [82, 'GS:STOXX50-DT - 240 min', '#4f5fe6'], [298, 'EUREX', '#4f5fe6'], [361, '05/06/2022', '#fff'], [453, 'L=3637.000', '#00ff00'],
    [549, 'Hi=3642.000', '#fff'], [650, 'Lo=3629.000', '#fff'], [756, 'C=3637.000', '#00ff00'], [855, 'Close', '#fff'],
    [913, '3637.000', '#00ffff'], [991, 'Bollinger Band S/MM', '#fff'], [1162, '3707.428', '#a6caf0'], [1238, '4133.992', '#a6caf0'],
    [1315, 'HILOW Alert', '#fff'], [1426, '3764.498', '#ff0000'], [1502, 'Strategy', '#fff'], [1582, 'Leo Velo Chart', '#fff'],
    [1708, '-0.2743', '#008078'], [1773, '-0.2...', '#ff0000'],
  ]),
  ...row(574, [
    [82, 'Leo Chart', '#fff'], [172, '-3.50', '#00ffff'], [220, '8.00', '#ff0000'], [261, '-8.00', '#ff0000'], [307, '4.00', '#808000'],
    [348, '-4.00', '#808000'], [395, '0.00', '#0000ff'], [436, 'Macd ciclico 2', '#fff'], [587, '0.00', '#800080'],
  ]),
  ...row(790, [
    [82, 'CCI Smothing ekam', '#fff'], [246, '-77.75', '#909090'], [303, '120.00', '#808080'], [361, '-120.00', '#808080'], [426, '-77.75', '#404040'],
    [482, 'Leo Velo Chart', '#fff'], [609, '1.08', '#008078'], [651, '1.19', '#ff0000'], [692, '1.06', '#0000ff'], [732, '0.00', '#008078'],
    [773, 'Stoc colore', '#fff'], [893, '-0.69', '#c86400'],
  ]),
]

const tabs = [
  ['STOX_TF60', 89], ['STOX_TF120', 95], ['STOX TF240', 92], ['STOX _100', 80], ['STOX_TF30', 91], ['FIB_TF60', 77], ['FIB_TF120', 80],
  ['FIB TF240', 79], ['FIB_100', 71], ['FIB_TF30', 73], ['BUND vs STOXX', 109], ['FIB Frame bassi', 116], ['FIB Giornaliero', 103],
  ['STOXX frame bassi', 127], ['STOXX giornaliero', 125], ['No PREZZI', 80], ['ANNUALE Indici', 110],
].map((t) => ({ n: t[0], w: t[1] }))

const cells = [
  { t: 'Acct:', w: 48 }, { t: 'Open Psns:', w: 90 }, { t: 'DT BP:', w: 62 }, { t: 'Purch Pwr:', w: 88 }, { t: 'Closed P/L:', w: 93 },
  { t: 'RT TE:', w: 60 }, { t: 'Open P/L:', w: 84 }, { t: 'ORDER BAR', w: 89, g: 1 }, { t: 'MACROS', w: 66, g: 1 },
]
</script>

<style scoped>
.ts{width:1920px;height:1080px;display:flex;flex-direction:column;overflow:hidden;background:#f0f0f0;font-family:"Liberation Sans",Arial,sans-serif;color:#111}

.title{height:28px;display:flex;align-items:center;flex-shrink:0;border-bottom:1px solid #3c4a58;box-sizing:border-box;
  background:
    radial-gradient(ellipse 280px 8px at 1070px 27px,rgba(40,60,90,.8),transparent),
    radial-gradient(ellipse 200px 6px at 720px 27px,rgba(255,255,255,.55),transparent),
    radial-gradient(ellipse 430px 12px at 280px 0,rgba(100,115,135,.75),transparent),
    linear-gradient(90deg,#c9d5e3 0,#c6d8ec 400px,#b5d8f8 700px,#abd2f2 1100px,#a3cdf2 1490px,#1c3b60 1505px,#1b3f66 1920px)}
.title-ico{width:20px;height:26px;margin-left:0;flex-shrink:0}
.title-txt{font-family:Roboto,"Liberation Sans",sans-serif;font-size:14.800px;white-space:pre;margin-left:5px;color:#161616}
.win-btns{margin-left:auto;display:flex;height:24px;align-self:flex-start;margin-right:4px;border:1px solid #44586c;border-top:0;border-radius:0 0 4px 4px;overflow:hidden}
.wb{width:37px;height:24px;border:0;padding:0;display:flex;align-items:center;justify-content:center;background:linear-gradient(#8aa0b8,#3e5a78);border-right:1px solid rgba(255,255,255,.4)}
.wb-close{width:62px;background:linear-gradient(#d9806a 0,#d06a52 45%,#c03a20 55%,#c85038 100%);border:0}
.wb-min{width:17px;height:5px;background:#fff;margin-top:9px;display:block}
.wb-res{width:10px;height:10px;border:2px solid #fff;outline:1px solid #dde;display:block;background:#3e5a78;box-shadow:3px -3px 0 0 #ccd}

.menu{height:29px;flex-shrink:0;display:flex;align-items:center;background:linear-gradient(#fbfbfc 0,#f3f4f8 30%,#dadff0 36%,#d6dbed 100%);border-bottom:1px solid #b8bac0;box-sizing:border-box}
.menu-logo{width:19px;height:17px;margin:0 7px 0 7px;flex-shrink:0}
.menu-item{font-size:15px;padding:0 8px 0 1px;margin-right:5px;color:#111}
.mdi{margin-left:auto;display:flex;gap:2px;margin-right:0;align-self:flex-start;margin-top:2px}
.mdi-btn{width:21px;height:26px;border:1px solid #b8cde4;background:#e3ebf6;display:flex;align-items:center;justify-content:center;color:#667;font-size:15px}
.mdi-min{width:6px;height:2px;background:#667;margin-top:8px;display:block}
.mdi-res{width:7px;height:6px;border:1px solid #667;border-top-width:2px;display:block}

.tools{height:31px;flex-shrink:0;display:flex;align-items:center;background:#f0f0f0;border-top:1px solid #fff;box-sizing:border-box;padding-left:26px}
.tool{width:22.7px;height:24px;display:flex;align-items:center;justify-content:center;flex-shrink:0}
.tool.wide{width:23px}
.tool.tiny{width:16px;margin-right:9.600px}
.tool.on{background:#f8f8f8;outline:1px solid #bbb;outline-offset:-1px}
.abc{font-size:12px;color:#111}
.sep{width:1px;height:24px;background:#a8a8a8;margin:0 4px;flex-shrink:0}
.grip{width:2px;height:24px;flex-shrink:0;margin-right:3.600px;background:repeating-linear-gradient(#999 0 2px,transparent 2px 4px)}
.tools .tool.tiny + .tool + .grip{margin-left:19px;margin-right:2.600px}
.tools .tool + .grip{margin-left:25px;margin-right:2px}
.combo{width:136px;height:23px;background:#fff;border:1px solid #d0d0d0;border-radius:2px;box-sizing:border-box;display:flex;align-items:center;padding-left:3px;font-size:14px;color:#777;position:relative;flex-shrink:0}
.combo-arrow{position:absolute;right:4px;top:8px;border:5px solid transparent;border-top:6px solid #000;border-bottom:0}

.chart{display:block;flex-shrink:0;background:#000;font-family:"Liberation Sans",Arial,sans-serif}
.t16{font-size:16px}
.t-ax{font-size:19.500px}

.hscroll{height:23px;flex-shrink:0;background:#f0f0f0;position:relative;display:flex;align-items:center;border-bottom:1px solid #9a9a9a;box-sizing:border-box}
.arr-l{margin-left:6px;border:5px solid transparent;border-right:5px solid #555;border-left:0}
.thumb{margin-left:auto;margin-right:6px;width:19px;height:15px;background:#e2e2e2;border:1px solid #aaa;box-sizing:border-box;display:flex;align-items:center;justify-content:center;gap:2px}
.thumb i{width:1px;height:7px;background:#555}
.arr-r{margin-right:8px;border:5px solid transparent;border-left:5px solid #777;border-right:0}

.tabs{height:18px;flex-shrink:0;display:flex;background:#f0f0f0;overflow:hidden}
.tab-nav{width:70px;flex-shrink:0;display:flex;padding-left:3px;box-sizing:border-box}
.nav{width:16px;height:13px;margin-top:2px;border:1px solid #ccc;box-sizing:border-box;display:flex;align-items:center;justify-content:center}
.nav b{display:block;border:3px solid transparent}
.nav .first,.nav .prev{border-right:4px solid #999;border-left:0}
.nav .next,.nav .last{border-left:4px solid #999;border-right:0}
.tab{position:relative;flex-shrink:0;height:18px;display:flex;align-items:center;justify-content:center;font-size:12px;color:#222;white-space:nowrap}
.tab::before{content:"";position:absolute;left:-4px;right:-4px;top:0;bottom:0;background:#555;clip-path:polygon(0 0,100% 0,calc(100% - 6px) 100%,6px 100%);z-index:0}
.tab::after{content:"";position:absolute;left:-3px;right:-3px;top:0;bottom:1px;background:#f0f0f0;clip-path:polygon(0 0,100% 0,calc(100% - 6px) 100%,6px 100%);z-index:0}
.tab span{position:relative;z-index:1}
.tab.active{font-weight:700;letter-spacing:-.3px;color:#000;z-index:1}
.tab.active::after{background:#fff}

.status{height:20px;flex-shrink:0;display:flex;align-items:center;background:#f0eeee;border-top:1px solid #999;box-sizing:border-box;font-size:13.500px;color:#222}
.help{margin-left:3px;margin-right:auto;font-size:14px}
.cell{box-sizing:border-box;padding-left:5px;height:100%;border-left:1px solid #c4c4c4;display:flex;align-items:center;white-space:nowrap}
.cell.green{color:#108c10}
.ball-cell{width:20px}
.ball{width:9px;height:11px;border-radius:50%;background:radial-gradient(circle at 40% 35%,#ff9a9a,#d00000 60%);display:block;margin:-6px 0 0 1px}
.clock{width:124px;font-size:14.500px}
.strip{height:2px;background:#4c6c8c;flex-shrink:0}
</style>

<style>
html,body{margin:0;background:#000}
</style>
